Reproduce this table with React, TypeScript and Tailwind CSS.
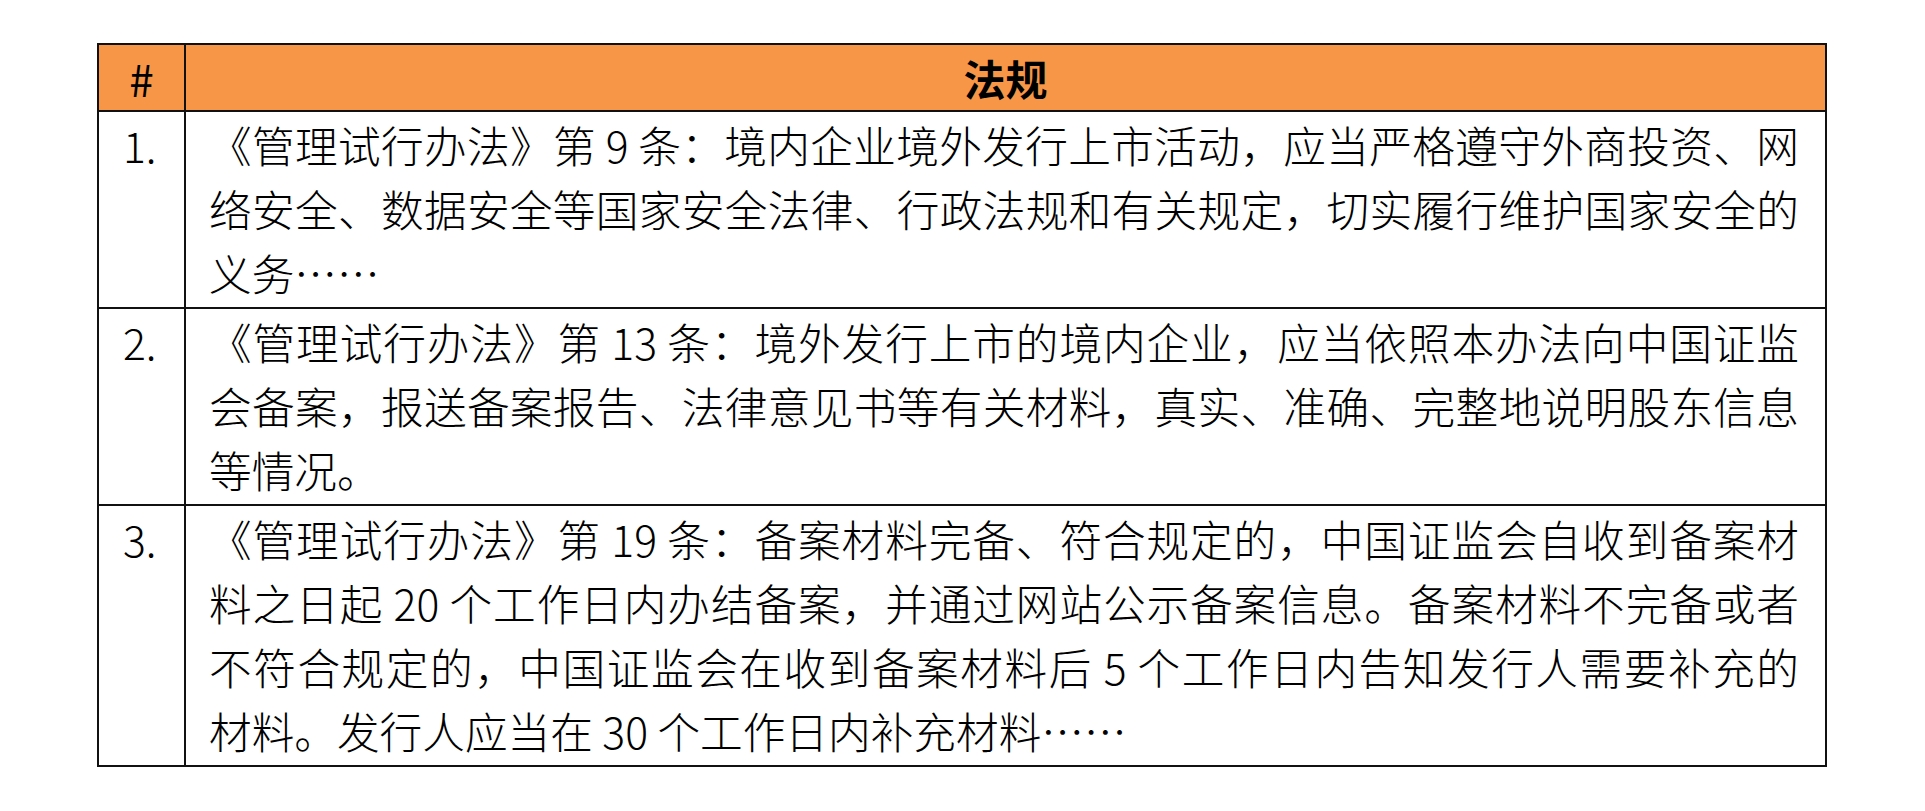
import React from "react";

const rows: { n: string; lines: string[] }[] = [
  {
    n: "1.",
    lines: [
      "《管理试行办法》第 9 条：境内企业境外发行上市活动，应当严格遵守外商投资、网",
      "络安全、数据安全等国家安全法律、行政法规和有关规定，切实履行维护国家安全的",
      "义务……",
    ],
  },
  {
    n: "2.",
    lines: [
      "《管理试行办法》第 13 条：境外发行上市的境内企业，应当依照本办法向中国证监",
      "会备案，报送备案报告、法律意见书等有关材料，真实、准确、完整地说明股东信息",
      "等情况。",
    ],
  },
  {
    n: "3.",
    lines: [
      "《管理试行办法》第 19 条：备案材料完备、符合规定的，中国证监会自收到备案材",
      "料之日起 20 个工作日内办结备案，并通过网站公示备案信息。备案材料不完备或者",
      "不符合规定的，中国证监会在收到备案材料后 5 个工作日内告知发行人需要补充的",
      "材料。发行人应当在 30 个工作日内补充材料……",
    ],
  },
];

export default function App() {
  return (
    <div
      className="min-h-[811px] w-[1925px] bg-white pt-[43px] pl-[97px] text-black"
      style={{ fontFamily: '"Noto Sans CJK SC", "Noto Sans", sans-serif' }}
    >
      <div className="w-[1730px] border-2 border-[#111]">
        <div className="flex h-[67px] border-b-2 border-[#111] bg-[#f79646] text-[42px] leading-[64px]">
          <div className="flex w-[87px] shrink-0 items-center justify-center border-r-2 border-[#111] text-[44px]">
            #
          </div>
          <div className="flex flex-1 items-center justify-center font-bold">法规</div>
        </div>
        {rows.map((r, i) => (
          <div
            key={r.n}
            className={
              i < rows.length - 1
                ? "flex border-b-2 border-[#111] text-[42.67px] font-light leading-[64px]"
                : "flex text-[42.67px] font-light leading-[64px]"
            }
          >
            <div className="w-[87px] shrink-0 border-r-2 border-[#111] pt-px pl-[24px]">{r.n}</div>
            <div className="flex-1 pt-px pb-[2px] pl-[23px] pr-[26px]">
              {r.lines.map((l, j) => (
                <div
                  key={j}
                  className={
                    j < r.lines.length - 1
                      ? "whitespace-nowrap text-justify [text-align-last:justify]"
                      : "whitespace-nowrap text-left"
                  }
                >
                  {l}
                </div>
              ))}
            </div>
          </div>
        ))}
      </div>
    </div>
  );
}
